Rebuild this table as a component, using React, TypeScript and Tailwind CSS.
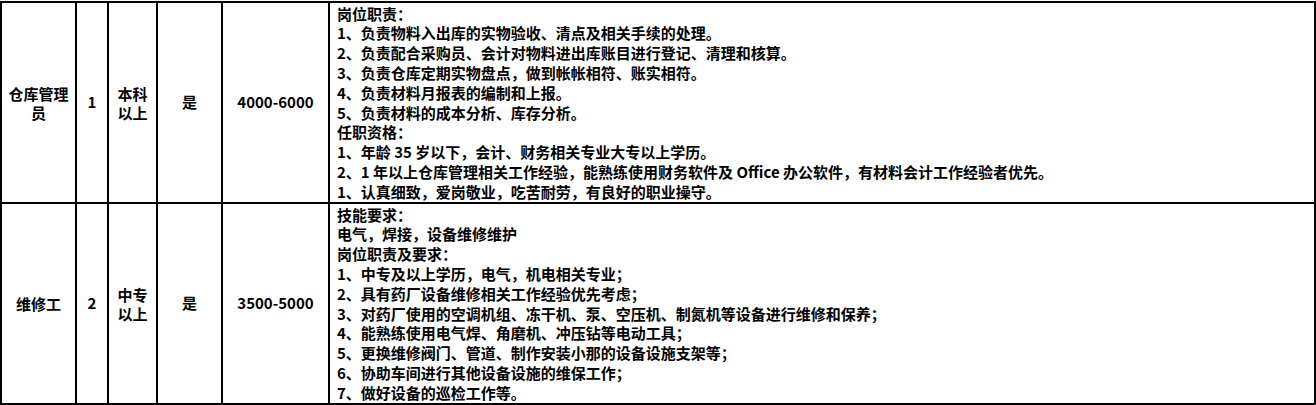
export default function App() {
  const rows = [
    {
      name: "仓库管理员",
      count: "1",
      edu: "本科以上",
      flag: "是",
      salary: "4000-6000",
      lines: [
        "岗位职责：",
        "1、负责物料入出库的实物验收、清点及相关手续的处理。",
        "2、负责配合采购员、会计对物料进出库账目进行登记、清理和核算。",
        "3、负责仓库定期实物盘点，做到帐帐相符、账实相符。",
        "4、负责材料月报表的编制和上报。",
        "5、负责材料的成本分析、库存分析。",
        "任职资格：",
        "1、年龄 35 岁以下，会计、财务相关专业大专以上学历。",
        "2、1 年以上仓库管理相关工作经验，能熟练使用财务软件及 Office 办公软件，有材料会计工作经验者优先。",
        "1、认真细致，爱岗敬业，吃苦耐劳，有良好的职业操守。",
      ],
    },
    {
      name: "维修工",
      count: "2",
      edu: "中专以上",
      flag: "是",
      salary: "3500-5000",
      lines: [
        "技能要求：",
        "电气，焊接，设备维修维护",
        "岗位职责及要求：",
        "1、中专及以上学历，电气，机电相关专业；",
        "2、具有药厂设备维修相关工作经验优先考虑；",
        "3、对药厂使用的空调机组、冻干机、泵、空压机、制氮机等设备进行维修和保养；",
        "4、能熟练使用电气焊、角磨机、冲压钻等电动工具；",
        "5、更换维修阀门、管道、制作安装小那的设备设施支架等；",
        "6、协助车间进行其他设备设施的维保工作；",
        "7、做好设备的巡检工作等。",
      ],
    },
  ]

  const cell = "border-2 border-black align-middle text-center"

  return (
    <div className="bg-white w-[1316px] h-[405px] pt-px text-black font-bold text-[15px] font-['Noto_Sans_CJK_SC',sans-serif]">
      <table className="border-collapse table-fixed w-[1314px]">
        <colgroup>
          <col className="w-[75px]" />
          <col className="w-[32px]" />
          <col className="w-[49px]" />
          <col className="w-[65px]" />
          <col className="w-[107px]" />
          <col className="w-[986px]" />
        </colgroup>
        <tbody>
          {rows.map((r) => (
            <tr key={r.name} className="h-[201px]">
              <td className={`${cell} px-1`}>
                <div className="leading-[19px]">{r.name}</div>
              </td>
              <td className={cell}>{r.count}</td>
              <td className={`${cell} px-[5px]`}>
                <div className="leading-[19px]">{r.edu}</div>
              </td>
              <td className={cell}>{r.flag}</td>
              <td className={cell}>{r.salary}</td>
              <td className="border-2 border-black align-middle text-left pl-[7px] pr-2 py-0">
                <div className="flex flex-col">
                  {r.lines.map((l, i) => (
                    <div key={i} className="whitespace-nowrap h-[19.8px] leading-[19.8px]">
                      {l}
                    </div>
                  ))}
                </div>
              </td>
            </tr>
          ))}
        </tbody>
      </table>
    </div>
  )
}
